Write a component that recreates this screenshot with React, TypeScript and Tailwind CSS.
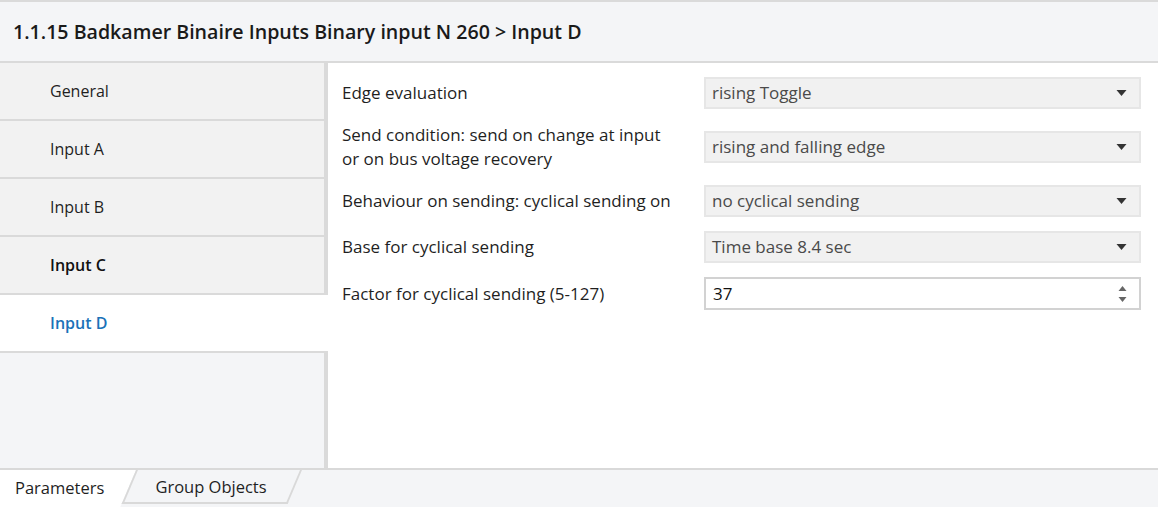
import type { ReactNode } from "react";

type Param = {
  label: ReactNode;
  value: string;
  kind: "select" | "number";
};

const NAV_ITEMS = ["General", "Input A", "Input B", "Input C", "Input D"];

const PARAMS: Param[] = [
  { label: "Edge evaluation", value: "rising Toggle", kind: "select" },
  {
    label: (
      <>
        Send condition: send on change at input
        <br />
        or on bus voltage recovery
      </>
    ),
    value: "rising and falling edge",
    kind: "select",
  },
  {
    label: "Behaviour on sending: cyclical sending on",
    value: "no cyclical sending",
    kind: "select",
  },
  { label: "Base for cyclical sending", value: "Time base 8.4 sec", kind: "select" },
  { label: "Factor for cyclical sending (5-127)", value: "37", kind: "number" },
];

function Caret() {
  return (
    <svg viewBox="0 0 10 6" className="h-[6px] w-[11px] fill-[#333]">
      <polygon points="0,0 10,0 5,6" />
    </svg>
  );
}

function Spinner() {
  return (
    <div className="flex flex-col items-center gap-[6px]">
      <svg viewBox="0 0 8 5" className="h-[5px] w-[9px] fill-[#666]">
        <polygon points="4,0 8,5 0,5" />
      </svg>
      <svg viewBox="0 0 8 5" className="h-[5px] w-[9px] fill-[#666]">
        <polygon points="0,0 8,0 4,5" />
      </svg>
    </div>
  );
}

function Field({ param }: { param: Param }) {
  if (param.kind === "number") {
    return (
      <div className="flex h-[33px] items-center justify-between border-2 border-[#d2d2d2] bg-white pl-[7px] pr-[12px] text-[#111]">
        <span>{param.value}</span>
        <Spinner />
      </div>
    );
  }
  return (
    <div className="flex h-[32px] items-center justify-between border-2 border-[#e6e6e6] bg-[#f1f1f1] pl-[6px] pr-[12px] text-[#4a4a4a]">
      <span>{param.value}</span>
      <Caret />
    </div>
  );
}

export default function App() {
  return (
    <div className="flex h-[507px] w-[1158px] flex-col overflow-hidden bg-white font-['Open_Sans','Noto_Sans',sans-serif] text-[17px] text-[#1f1f1f]">
      <header className="flex h-[63px] shrink-0 items-center border-y-2 border-[#dadada] bg-[#f4f5f7] px-[13px]">
        <h1 className="text-[19.6px] font-semibold text-[#1a1a1a]">
          1.1.15 Badkamer Binaire Inputs Binary input N 260 &gt; Input D
        </h1>
      </header>

      <div className="flex min-h-0 flex-1">
        <nav className="flex w-[328px] shrink-0 flex-col text-[16px]">
          {NAV_ITEMS.map((item) => {
            const active = item === "Input D";
            return (
              <div
                key={item}
                className={
                  active
                    ? "flex h-[58px] items-center border-b-2 border-[#dadada] bg-white pl-[50px] font-semibold text-[#1b72b8]"
                    : item === "Input C"
                      ? "flex h-[58px] items-center border-r-4 border-b-2 border-[#dadada] bg-[#f2f2f2] pl-[50px] font-semibold text-[#111]"
                      : "flex h-[58px] items-center border-r-4 border-b-2 border-[#dadada] bg-[#f2f2f2] pl-[50px]"
                }
              >
                {item}
              </div>
            );
          })}
          <div className="flex-1 border-r-4 border-[#dadada] bg-[#f4f5f7]" />
        </nav>

        <main className="flex flex-1 flex-col gap-[14px] pt-[14px] pr-[17px] pl-[14px]">
          {PARAMS.map((param, i) => (
            <div key={i} className="grid grid-cols-[362px_1fr] items-center">
              <div className="leading-[24px]">{param.label}</div>
              <Field param={param} />
            </div>
          ))}
        </main>
      </div>

      <footer className="flex h-[39px] shrink-0 border-t-2 border-[#d9d9d9] bg-[#f4f5f7] text-[16.5px]">
        <div className="relative flex h-full w-[136px] items-center">
          <div className="absolute inset-y-0 -left-6 right-0 origin-top-left -skew-x-[23deg] bg-white" />
          <span className="relative pl-[15px]">Parameters</span>
        </div>
        <div className="relative flex h-[34px] w-[166px] items-center justify-center pr-[16px]">
          <div className="absolute inset-0 origin-top-left -skew-x-[23deg] border-x-2 border-b-2 border-[#d9d9d9] bg-[#f4f5f7]" />
          <span className="relative">Group Objects</span>
        </div>
      </footer>
    </div>
  );
}
